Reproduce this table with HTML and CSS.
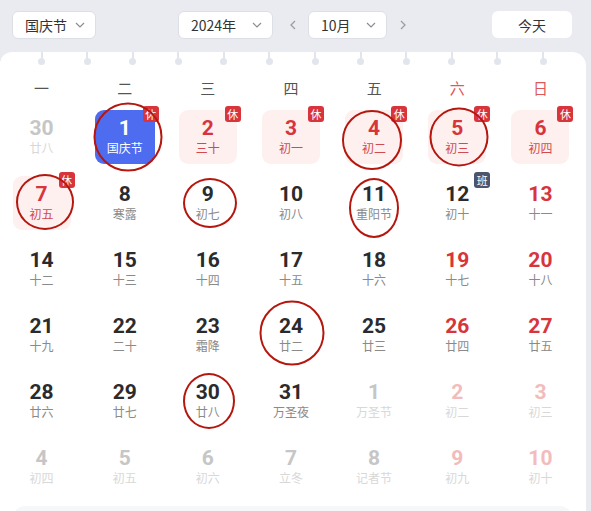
FILE: index.html
```html
<!DOCTYPE html>
<html lang="zh-CN">
<head>
<meta charset="utf-8">
<title>日历</title>
<link rel="stylesheet" href="styles.css">
</head>
<body>
<div class="page">
  <header class="toolbar">
    <div class="select sel-holiday"><span>国庆节</span><svg class="chev" viewBox="0 0 10 6"><path d="M1 1l4 4 4-4"/></svg></div>
    <div class="select sel-year"><span>2024年</span><svg class="chev" viewBox="0 0 10 6"><path d="M1 1l4 4 4-4"/></svg></div>
    <button class="nav"><svg viewBox="0 0 6 10"><path d="M5 1L1 5l4 4"/></svg></button>
    <div class="select sel-month"><span>10月</span><svg class="chev" viewBox="0 0 10 6"><path d="M1 1l4 4 4-4"/></svg></div>
    <button class="nav nav-next"><svg viewBox="0 0 6 10"><path d="M1 1l4 4-4 4"/></svg></button>
    <button class="today">今天</button>
  </header>

  <main class="card">
    <div class="pins">
      <i></i><i></i><i></i><i></i><i></i><i></i><i></i><i></i><i></i><i></i><i></i><i></i>
    </div>
    <div class="week">
      <span>一</span><span>二</span><span>三</span><span>四</span><span>五</span><span class="wk-red">六</span><span class="wk-red">日</span>
    </div>
    <div class="grid">
      <div class="cell"><div class="day other"><b>30</b><small>廿八</small></div></div>
      <div class="cell"><div class="day selected"><b>1</b><small>国庆节</small><em class="badge">休</em></div><span class="ring ring-1"></span></div>
      <div class="cell"><div class="day rest"><b>2</b><small>三十</small><em class="badge">休</em></div></div>
      <div class="cell"><div class="day rest"><b>3</b><small>初一</small><em class="badge">休</em></div></div>
      <div class="cell"><div class="day rest"><b>4</b><small>初二</small><em class="badge">休</em></div><span class="ring ring-4"></span></div>
      <div class="cell"><div class="day rest"><b>5</b><small>初三</small><em class="badge">休</em></div><span class="ring ring-5"></span></div>
      <div class="cell"><div class="day rest"><b>6</b><small>初四</small><em class="badge">休</em></div></div>

      <div class="cell"><div class="day rest"><b>7</b><small>初五</small><em class="badge">休</em></div><span class="ring ring-7"></span></div>
      <div class="cell"><div class="day"><b>8</b><small>寒露</small></div></div>
      <div class="cell"><div class="day"><b>9</b><small>初七</small></div><span class="ring ring-9"></span></div>
      <div class="cell"><div class="day"><b>10</b><small>初八</small></div></div>
      <div class="cell"><div class="day"><b>11</b><small>重阳节</small></div><span class="ring ring-11"></span></div>
      <div class="cell"><div class="day"><b>12</b><small>初十</small><em class="badge work">班</em></div></div>
      <div class="cell"><div class="day weekend"><b>13</b><small>十一</small></div></div>

      <div class="cell"><div class="day"><b>14</b><small>十二</small></div></div>
      <div class="cell"><div class="day"><b>15</b><small>十三</small></div></div>
      <div class="cell"><div class="day"><b>16</b><small>十四</small></div></div>
      <div class="cell"><div class="day"><b>17</b><small>十五</small></div></div>
      <div class="cell"><div class="day"><b>18</b><small>十六</small></div></div>
      <div class="cell"><div class="day weekend"><b>19</b><small>十七</small></div></div>
      <div class="cell"><div class="day weekend"><b>20</b><small>十八</small></div></div>

      <div class="cell"><div class="day"><b>21</b><small>十九</small></div></div>
      <div class="cell"><div class="day"><b>22</b><small>二十</small></div></div>
      <div class="cell"><div class="day"><b>23</b><small>霜降</small></div></div>
      <div class="cell"><div class="day"><b>24</b><small>廿二</small></div><span class="ring ring-24"></span></div>
      <div class="cell"><div class="day"><b>25</b><small>廿三</small></div></div>
      <div class="cell"><div class="day weekend"><b>26</b><small>廿四</small></div></div>
      <div class="cell"><div class="day weekend"><b>27</b><small>廿五</small></div></div>

      <div class="cell"><div class="day"><b>28</b><small>廿六</small></div></div>
      <div class="cell"><div class="day"><b>29</b><small>廿七</small></div></div>
      <div class="cell"><div class="day"><b>30</b><small>廿八</small></div><span class="ring ring-30"></span></div>
      <div class="cell"><div class="day"><b>31</b><small>万圣夜</small></div></div>
      <div class="cell"><div class="day other"><b>1</b><small>万圣节</small></div></div>
      <div class="cell"><div class="day other other-red"><b>2</b><small>初二</small></div></div>
      <div class="cell"><div class="day other other-red"><b>3</b><small>初三</small></div></div>

      <div class="cell"><div class="day other"><b>4</b><small>初四</small></div></div>
      <div class="cell"><div class="day other"><b>5</b><small>初五</small></div></div>
      <div class="cell"><div class="day other"><b>6</b><small>初六</small></div></div>
      <div class="cell"><div class="day other"><b>7</b><small>立冬</small></div></div>
      <div class="cell"><div class="day other"><b>8</b><small>记者节</small></div></div>
      <div class="cell"><div class="day other other-red"><b>9</b><small>初九</small></div></div>
      <div class="cell"><div class="day other other-red"><b>10</b><small>初十</small></div></div>
    </div>
    <div class="footer-box"></div>
  </main>
</div>
</body>
</html>
```

FILE: styles.css
```css
* { box-sizing: border-box; }

html, body {
  margin: 0;
  padding: 0;
  height: 100%;
  overflow: hidden;
}

body {
  background: #e9ebf1;
  font-family: "Noto Sans CJK SC", "Noto Sans", sans-serif;
  color: #333;
}

.page {
  width: 591px;
}

/* ---------- toolbar ---------- */
.toolbar {
  height: 52px;
  display: flex;
  align-items: flex-start;
  padding: 11px 0 0 12px;
}

.select {
  height: 28px;
  background: #fff;
  border: 1px solid #dcdfe6;
  border-radius: 6px;
  display: flex;
  align-items: center;
  justify-content: space-between;
  padding: 0 10px 0 12px;
  font-size: 14px;
  color: #333;
}

.select span { line-height: 1; }

.chev {
  width: 10px;
  height: 6px;
  fill: none;
  stroke: #8a8d93;
  stroke-width: 1.2;
}

.sel-holiday { width: 84px; }
.sel-year { width: 95px; margin-left: 82px; }
.sel-month { width: 79px; margin-left: 5px; }

.nav {
  width: 20px;
  height: 28px;
  margin-left: 10px;
  padding: 0;
  border: 0;
  background: transparent;
  display: flex;
  align-items: center;
  justify-content: center;
}

.nav svg {
  width: 6px;
  height: 10px;
  fill: none;
  stroke: #9a9da4;
  stroke-width: 1.3;
}

.nav-next { margin-left: 6px; }

.today {
  width: 80px;
  height: 27px;
  margin-left: 79px;
  border: 0;
  border-radius: 6px;
  background: #fff;
  font-family: inherit;
  font-size: 14px;
  color: #333;
  padding: 0;
}

/* ---------- card ---------- */
.card {
  position: relative;
  width: 586px;
  min-height: 460px;
  background: #fff;
  border-radius: 12px 14px 0 0;
  padding-top: 19px;
}

.pins {
  position: absolute;
  top: 0;
  left: 38px;
  display: flex;
  gap: 38.6px;
}

.pins i {
  position: relative;
  display: block;
  width: 7px;
  height: 12px;
}

.pins i::before {
  content: "";
  position: absolute;
  left: 2.5px;
  top: 0;
  width: 2px;
  height: 8px;
  background: #e2e5ec;
}

.pins i::after {
  content: "";
  position: absolute;
  left: 0;
  top: 5.5px;
  width: 7px;
  height: 7px;
  border-radius: 50%;
  background: #e2e5ec;
}

.week {
  width: 582px;
  height: 33px;
  display: grid;
  grid-template-columns: repeat(7, 1fr);
  align-items: center;
  text-align: center;
  font-size: 15px;
  color: #555;
}

.week .wk-red { color: #e0575a; }

.grid {
  width: 582px;
  display: grid;
  grid-template-columns: repeat(7, 1fr);
  grid-auto-rows: 66px;
}

.cell {
  position: relative;
  display: flex;
  align-items: center;
  justify-content: center;
}

.day {
  position: relative;
  width: 58px;
  height: 54px;
  border-radius: 9px;
  display: flex;
  flex-direction: column;
  align-items: center;
  justify-content: center;
}

.day b {
  font-family: Roboto, "Liberation Sans", sans-serif;
  font-weight: 700;
  font-size: 21px;
  line-height: 22px;
  color: #2b2b2e;
}

.day small {
  font-size: 12px;
  line-height: 18px;
  color: #8a8a8a;
}

.day.rest { background: #fdf0ef; }
.day.rest b { color: #d8343b; }
.day.rest small { color: #d24a4f; }

.day.weekend b { color: #d8343b; }

.day.selected { background: #4d6cf0; width: 60px; }
.day.selected b,
.day.selected small { color: #fff; }

.day.other b { color: #c6c6c6; }
.day.other small { color: #d8d8d8; }
.day.other-red b { color: #f2bcbc; }

.badge {
  position: absolute;
  top: -4px;
  right: -4px;
  width: 16px;
  height: 16px;
  border-radius: 3px;
  background: #d8343b;
  color: #fff;
  font-style: normal;
  font-size: 11px;
  line-height: 16px;
  text-align: center;
}

.badge.work { background: #4b556c; }

/* ---------- hand-drawn annotations ---------- */
.ring {
  position: absolute;
  left: 50%;
  top: 50%;
  border: 2.5px solid #b5170f;
  border-radius: 50%;
  transform: translate(-50%, -50%);
  pointer-events: none;
}

.ring-1  { width: 69px; height: 69px; margin-left: 3px; }
.ring-4  { width: 60px; height: 60px; margin-left: -2px; margin-top: 2.5px; }
.ring-5  { width: 59px; height: 59px; margin-left: 2px; }
.ring-7  { width: 58px; height: 56px; margin-left: 3px; margin-top: -1.5px; }
.ring-9  { width: 54px; height: 50px; margin-left: 2px; }
.ring-11 { width: 50px; height: 60px; margin-top: 4.5px; }
.ring-24 { width: 65px; height: 65px; margin-left: 1px; margin-top: -2.5px; }
.ring-30 { width: 52px; height: 56px; margin-left: 1px; }

.footer-box {
  margin: 6px 14px 0 13px;
  height: 24px;
  border-radius: 12px;
  background: #f6f7f9;
}
```
